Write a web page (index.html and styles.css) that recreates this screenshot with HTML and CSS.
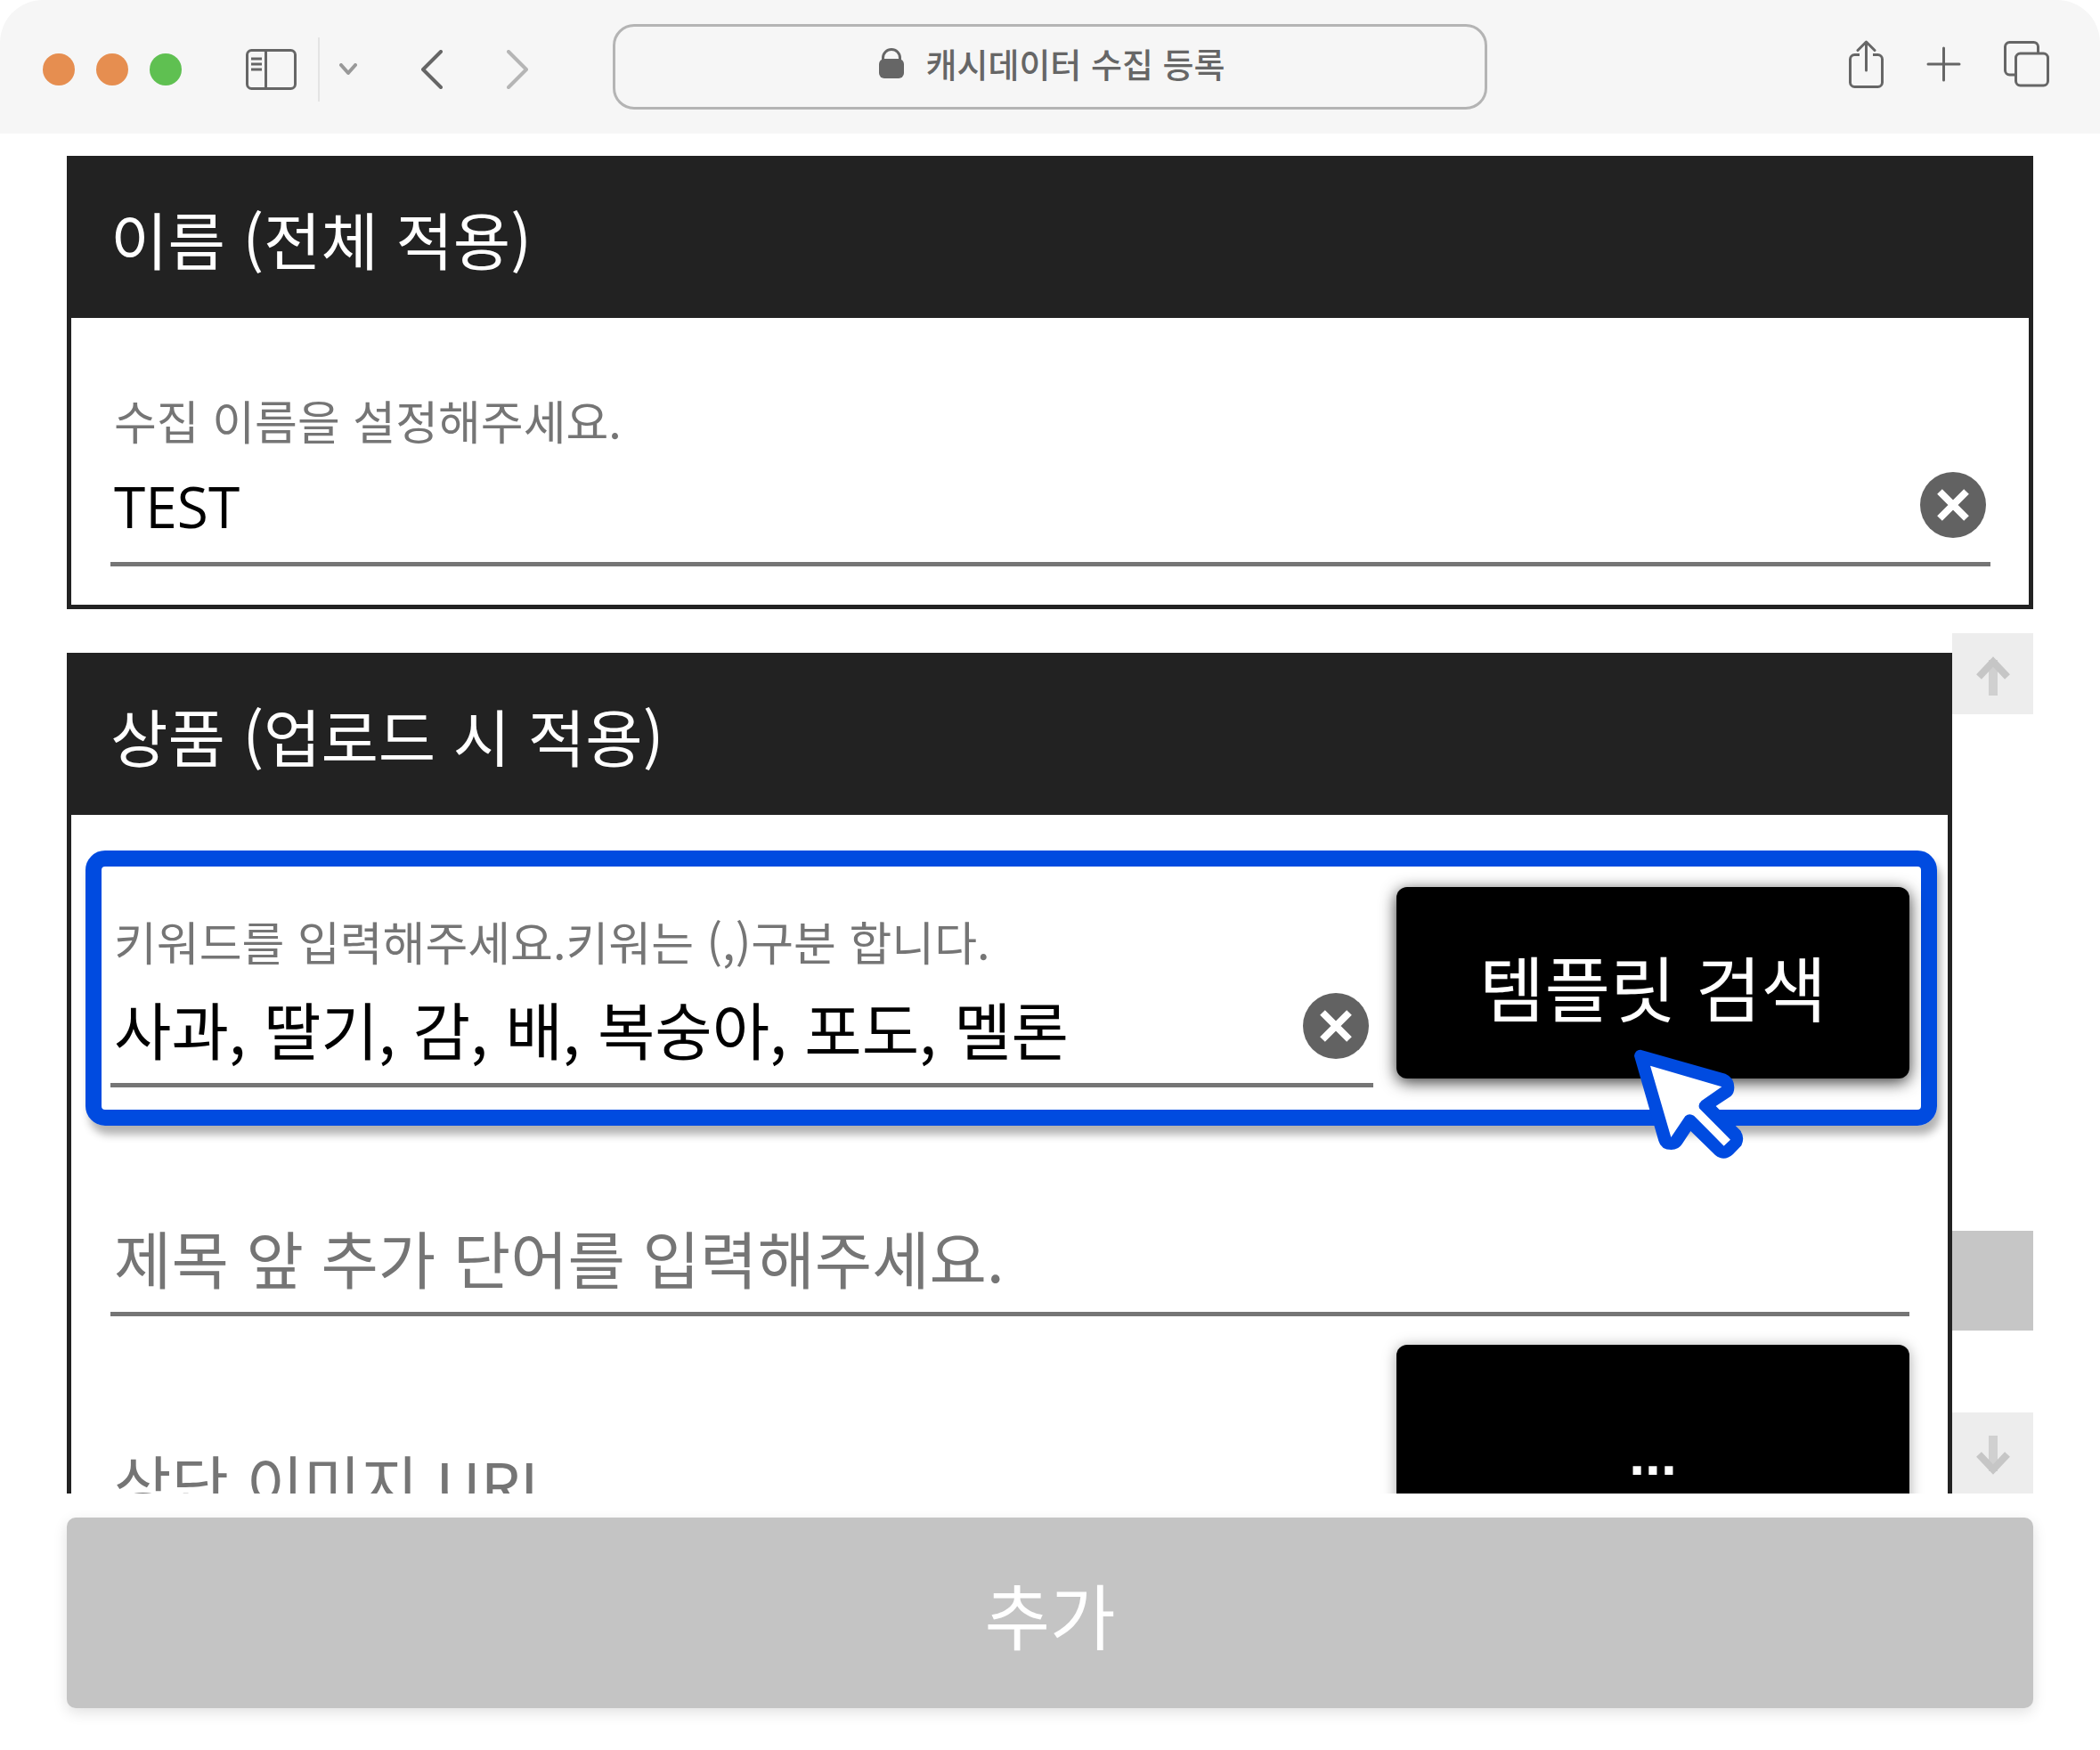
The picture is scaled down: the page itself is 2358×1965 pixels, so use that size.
FILE: index.html
```html
<!DOCTYPE html>
<html lang="ko">
<head>
<meta charset="utf-8">
<meta name="viewport" content="width=device-width, initial-scale=1">
<title>캐시데이터 수집 등록</title>
<link rel="stylesheet" href="styles.css">
</head>
<body>
<div class="window">
  <header class="toolbar">
    <div class="toolbar-left">
      <div class="lights">
        <button class="light" type="button" aria-label="닫기"></button>
        <button class="light" type="button" aria-label="최소화"></button>
        <button class="light light-green" type="button" aria-label="확대"></button>
      </div>
      <button class="icon-button" type="button" aria-label="사이드바">
        <svg width="57" height="46" viewBox="0 0 57 46" fill="none" stroke="#666" stroke-width="3"><rect x="1.5" y="1.5" width="54" height="43" rx="5"/><path d="M22.500 2v42M6 11h12M6 17h12M6 23h12"/></svg>
      </button>
      <span class="divider"></span>
      <button class="icon-button chevron" type="button" aria-label="탭 그룹">
        <svg width="20" height="14" viewBox="0 0 20 14" fill="none" stroke="#999" stroke-width="4" stroke-linecap="round" stroke-linejoin="round"><path d="M2 2l8 9 8-9"/></svg>
      </button>
      <button class="icon-button back" type="button" aria-label="뒤로">
        <svg width="24" height="44" viewBox="0 0 24 44" fill="none" stroke="#666" stroke-width="4" stroke-linecap="round" stroke-linejoin="round"><path d="M22 2L2 22l20 20"/></svg>
      </button>
      <button class="icon-button forward" type="button" aria-label="앞으로">
        <svg width="24" height="44" viewBox="0 0 24 44" fill="none" stroke="#b5b5b5" stroke-width="4" stroke-linecap="round" stroke-linejoin="round"><path d="M2 2l20 20L2 42"/></svg>
      </button>
    </div>
    <div class="address">
      <svg width="28" height="34" viewBox="0 0 28 34"><rect x="0" y="12" width="28" height="22" rx="6" fill="#666"/><path d="M4.500 15v-4a9.500 9.500 0 0 1 19 0v4" fill="none" stroke="#666" stroke-width="3"/></svg>
      <input class="address-input" type="text" aria-label="주소" value="캐시데이터 수집 등록">
    </div>
    <div class="toolbar-right">
      <button class="icon-button" type="button" aria-label="공유">
        <svg width="39" height="54" viewBox="0 0 39 54" fill="none" stroke="#666" stroke-width="3" stroke-linejoin="round"><path d="M12 16.500H6.500a5 5 0 0 0-5 5v26a5 5 0 0 0 5 5h26a5 5 0 0 0 5-5v-26a5 5 0 0 0-5-5H27"/><path d="M19.500 34V2M10 11.500L19.500 2l9.500 9.500" stroke-linecap="round"/></svg>
      </button>
      <button class="icon-button" type="button" aria-label="새 탭">
        <svg width="39" height="40" viewBox="0 0 39 40" fill="none" stroke="#666" stroke-width="3" stroke-linecap="round"><path d="M19.500 2v36M2 20h35"/></svg>
      </button>
      <button class="icon-button" type="button" aria-label="탭 개요">
        <svg width="51" height="52" viewBox="0 0 51 52" fill="none" stroke="#666" stroke-width="3"><path d="M12 38H6.500a5 5 0 0 1-5-5V6.500a5 5 0 0 1 5-5h27a5 5 0 0 1 5 5V13"/><rect x="13.500" y="14" width="36" height="36" rx="5"/></svg>
      </button>
    </div>
  </header>

  <main class="page">
    <section class="card">
      <h2 class="card-title">이름 (전체 적용)</h2>
      <div class="card-body card-body-name">
        <div class="field">
          <label class="field-label" for="name">수집 이름을 설정해주세요.</label>
          <div class="field-control">
            <input class="field-input latin" id="name" type="text" value="TEST">
            <button class="clear" type="button" aria-label="지우기">
              <svg width="76" height="76" viewBox="0 0 76 76"><circle cx="38" cy="38" r="37" fill="#626262"/><path d="M23 23l30 30M53 23L23 53" stroke="#fff" stroke-width="8"/></svg>
            </button>
          </div>
        </div>
      </div>
    </section>

    <div class="scroller">
      <section class="card card-product">
        <h2 class="card-title">상품 (업로드 시 적용)</h2>
        <div class="card-body card-body-product">
          <div class="row highlight">
            <div class="field">
              <label class="field-label" for="keywords">키워드를 입력해주세요.키워는 (,)구분 합니다.</label>
              <div class="field-control">
                <input class="field-input" id="keywords" type="text" value="사과, 딸기, 감, 배, 복숭아, 포도, 멜론">
                <button class="clear" type="button" aria-label="지우기">
                  <svg width="76" height="76" viewBox="0 0 76 76"><circle cx="38" cy="38" r="37" fill="#626262"/><path d="M23 23l30 30M53 23L23 53" stroke="#fff" stroke-width="8"/></svg>
                </button>
              </div>
            </div>
            <button class="action action-active" type="button">템플릿 검색</button>
            <svg class="cursor" width="160" height="160" viewBox="0 0 480 480"><path fill="#004be0" d="M45 74Q48 53 66 53L352 134Q382 147 382 180Q382 200 370 210L320 243L402 325Q419 348 406 376L378 405Q348 432 318 408L235 327L207 370Q195 390 170 390Q135 390 127 360Z"/><path fill="#fff" d="M99 107L340 178L272 225Q258 238 265 251L369 356L347 377L246 275Q230 265 217 277L169 348Z"/></svg>
          </div>
          <div class="row">
            <div class="field">
              <div class="field-control">
                <input class="field-input" type="text" aria-label="제목 앞 추가 단어" placeholder="제목 앞 추가 단어를 입력해주세요.">
              </div>
            </div>
          </div>
          <div class="row row-image">
            <div class="field">
              <div class="field-control">
                <input class="field-input" type="text" aria-label="상단 이미지 URL" placeholder="상단 이미지 URL">
              </div>
            </div>
            <button class="action action-more" type="button">...</button>
          </div>
        </div>
      </section>
      <div class="scrollbar">
        <button class="scroll-button" type="button" aria-label="위로">
          <svg width="38" height="44" viewBox="0 0 38 44" fill="none" stroke="#c6c6c6"><path d="M19 44V4" stroke-width="10" stroke="#d0d0d0"/><path d="M3 23L19 6l16 17" stroke-width="8"/></svg>
        </button>
        <div class="track"><div class="thumb"></div></div>
        <button class="scroll-button" type="button" aria-label="아래로">
          <svg width="38" height="44" viewBox="0 0 38 44" fill="none" stroke="#c6c6c6"><path d="M19 0v40" stroke-width="10" stroke="#d0d0d0"/><path d="M3 21l16 17 16-17" stroke-width="8"/></svg>
        </button>
      </div>
    </div>

    <button class="submit" type="button">추가</button>
  </main>
</div>
</body>
</html>
```
FILE: styles.css
```css
* {
  box-sizing: border-box;
}

body {
  margin: 0;
  background: #fff;
  color: #000;
  font-family: "Noto Sans CJK KR", sans-serif;
}

button,
input {
  margin: 0;
  padding: 0;
  border: 0;
  background: none;
  color: inherit;
  font: inherit;
}

svg {
  display: block;
}

.window {
  display: flex;
  flex-direction: column;
  height: 100vh;
}

/* Browser toolbar */
.toolbar {
  display: grid;
  grid-template-columns: minmax(0, 1fr) 982px minmax(0, 1fr);
  align-items: center;
  flex: none;
  height: 150px;
  border-radius: 48px 48px 0 0;
  background: #f6f6f6;
}

.toolbar-left {
  display: flex;
  align-items: center;
  padding: 6px 0 0 48px;
}

.lights {
  display: flex;
  gap: 24px;
  margin-right: 72px;
}

.light {
  width: 36px;
  height: 36px;
  border-radius: 50%;
  background: #e68e50;
}

.light-green {
  background: #5fc051;
}

.divider {
  width: 2px;
  height: 72px;
  margin: 0 22px 0 24px;
  background: #e4e4e4;
}

.back,
.forward {
  margin-left: 72px;
}

.address {
  display: flex;
  align-items: center;
  justify-content: center;
  gap: 25px;
  height: 96px;
  padding: 0 0 8px 8px;
  border: 3px solid #b4b4b4;
  border-radius: 24px;
}

.address-input {
  width: 340px;
  color: #666;
  font-size: 38px;
  font-weight: 500;
  line-height: 56px;
}

.toolbar-right {
  display: flex;
  align-items: center;
  justify-content: flex-end;
  gap: 48px;
  padding: 0 57px 6px 0;
}

/* Page */
.page {
  display: flex;
  flex: 1;
  flex-direction: column;
  gap: 27px;
  min-height: 0;
  padding: 25px 75px 47px;
}

.card {
  flex: none;
  border: 5px solid #222;
  border-top: 0;
}

.card-title {
  height: 182px;
  margin: 0;
  padding: 4px 44px 0;
  background: #222;
  color: #fff;
  font-size: 70px;
  font-weight: 400;
  line-height: 178px;
}

.card-body-name {
  padding: 84px 43px 43px 44px;
}

.card-body-product {
  padding: 40px 12px 43px 16px;
}

.field {
  flex: 1;
  min-width: 0;
}

.field-label {
  display: block;
  padding: 0 0 2px 4px;
  color: #757575;
  font-size: 52px;
  line-height: 62px;
}

.field-control {
  display: flex;
  align-items: center;
  height: 131px;
  padding: 0 4px 2px;
  border-bottom: 5px solid #757575;
}

.field-input {
  flex: 1;
  min-width: 0;
  padding-top: 6px;
  outline: 0;
  font-size: 70px;
  line-height: 104px;
}

.field-input::placeholder {
  color: #757575;
  opacity: 1;
}

.latin {
  padding-top: 4px;
  font-family: "Open Sans", "Noto Sans CJK KR", sans-serif;
  font-size: 64px;
}

.row {
  display: flex;
  align-items: flex-end;
  gap: 26px;
  padding: 0 31px 0 28px;
}

.row-image {
  margin-top: 32px;
}

.highlight {
  position: relative;
  height: 309px;
  margin-bottom: 83px;
  padding: 0 13px 25px 10px;
  border: 18px solid #004be0;
  border-radius: 22px;
  box-shadow: 4px 10px 10px rgba(0, 0, 0, 0.3);
}

.action {
  flex: none;
  width: 576px;
  height: 215px;
  margin-bottom: 5px;
  padding-top: 4px;
  border-radius: 12px;
  background: #000;
  box-shadow: 0 2px 16px rgba(0, 0, 0, 0.35);
  color: #fff;
  font-size: 80px;
  line-height: 120px;
}

.action-active {
  margin-bottom: 10px;
  box-shadow: 0 4px 18px rgba(0, 0, 0, 0.8);
}

.action-more {
  padding-top: 32px;
  font-family: "Liberation Sans", sans-serif;
  font-size: 64px;
  font-weight: 700;
}

.cursor {
  position: absolute;
  right: 177px;
  bottom: -75px;
}

/* Scrolling product panel */
.scroller {
  display: flex;
  flex: 1;
  align-items: flex-start;
  min-height: 0;
  overflow: hidden;
}

.card-product {
  flex: 1;
  min-width: 0;
  margin-top: 22px;
}

.scrollbar {
  display: flex;
  flex: none;
  flex-direction: column;
  width: 91px;
  height: 100%;
}

.scroll-button {
  display: flex;
  flex: none;
  align-items: center;
  justify-content: center;
  height: 91px;
  padding-top: 4px;
  background: #ededed;
}

.track {
  display: flex;
  flex: 1;
  flex-direction: column;
}

.track::before {
  flex: 579;
  content: "";
}

.track::after {
  flex: 92;
  content: "";
}

.thumb {
  height: 112px;
  background: #c6c6c6;
}

.submit {
  flex: none;
  height: 214px;
  border-radius: 10px;
  background: #c4c4c4;
  box-shadow: 0 5px 16px rgba(0, 0, 0, 0.12);
  color: #fff;
  font-size: 80px;
}
```
